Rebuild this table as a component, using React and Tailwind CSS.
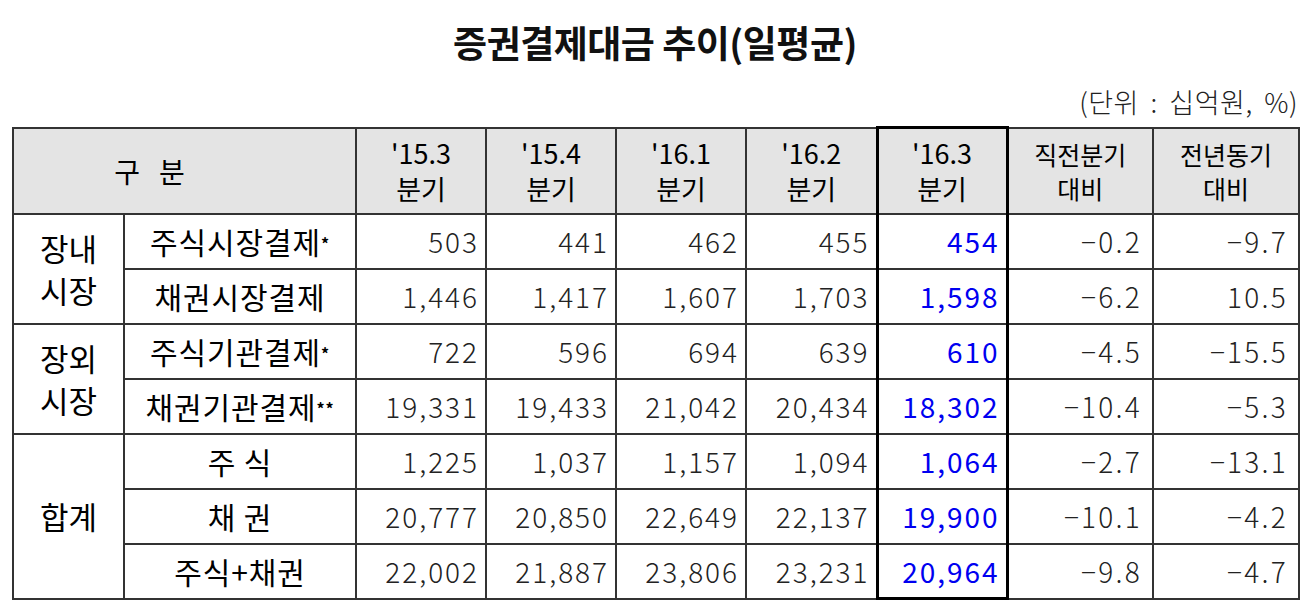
const cols = ["'15.3", "'15.4", "'16.1", "'16.2", "'16.3"];

const rows = [
  { group: ['장내', '시장'], span: 2, label: '주식시장결제', mark: '*', v: ['503', '441', '462', '455', '454'], a: '-0.2', b: '-9.7' },
  { label: '채권시장결제', v: ['1,446', '1,417', '1,607', '1,703', '1,598'], a: '-6.2', b: '10.5' },
  { group: ['장외', '시장'], span: 2, label: '주식기관결제', mark: '*', v: ['722', '596', '694', '639', '610'], a: '-4.5', b: '-15.5' },
  { label: '채권기관결제', mark: '**', v: ['19,331', '19,433', '21,042', '20,434', '18,302'], a: '-10.4', b: '-5.3' },
  { group: ['합계'], span: 3, label: '주 식', v: ['1,225', '1,037', '1,157', '1,094', '1,064'], a: '-2.7', b: '-13.1' },
  { label: '채 권', v: ['20,777', '20,850', '22,649', '22,137', '19,900'], a: '-10.1', b: '-4.2' },
  { label: '주식+채권', v: ['22,002', '21,887', '23,806', '23,231', '20,964'], a: '-9.8', b: '-4.7' },
];

const font = { fontFamily: '"Noto Sans CJK KR", "Noto Sans", sans-serif' };
const cell = 'border-2 border-[#333]';
const hot = 'border-x-[3px] border-x-black';

export default function App() {
  return (
    <div className="w-[1310px] h-[611px] bg-white text-black" style={font}>
      <h1 className="pt-[16px] text-center text-[37px] font-bold leading-[52px] tracking-[-0.5px] text-[#111]">
        증권결제대금 추이(일평균)
      </h1>
      <div className="pr-[12px] pt-[16px] text-right text-[27px] leading-[36px] font-light text-[#222] [word-spacing:5px] tracking-[0.02em]">
        (단위 : 십억원, %)
      </div>
      <table className="ml-[12px] mt-[6px] border-collapse table-fixed w-[1286px]">
        <colgroup>
          <col className="w-[111px]" />
          <col className="w-[232px]" />
          <col className="w-[130px]" />
          <col className="w-[130px]" />
          <col className="w-[130px]" />
          <col className="w-[131px]" />
          <col className="w-[130px]" />
          <col className="w-[146px]" />
          <col className="w-[146px]" />
        </colgroup>
        <thead>
          <tr className="h-[86px] bg-[#e4e4e4]">
            <th colSpan={2} className={`${cell} text-[28px] font-normal pr-[70px]`}>
              구&nbsp;&nbsp;&nbsp;분
            </th>
            {cols.map((c, i) => (
              <th
                key={c}
                className={`${cell} ${i === 4 ? hot + ' border-t-[3px] border-t-black' : ''} text-[27px] font-normal leading-[36px]`}
              >
                {c}
                <br />
                분기
              </th>
            ))}
            <th className={`${cell} text-[25px] font-normal leading-[34px]`}>
              직전분기
              <br />
              대비
            </th>
            <th className={`${cell} text-[25px] font-normal leading-[34px]`}>
              전년동기
              <br />
              대비
            </th>
          </tr>
        </thead>
        <tbody>
          {rows.map((r, ri) => (
            <tr key={ri} className="h-[55px]">
              {r.group && (
                <td rowSpan={r.span} className={`${cell} text-center text-[31px] leading-[42px] font-normal`}>
                  {r.group.map((g) => (
                    <div key={g}>{g}</div>
                  ))}
                </td>
              )}
              <td className={`${cell} text-center text-[30px] font-normal tracking-[0.03em]`}>
                {r.label}
                {r.mark && <sup className="text-[16px] font-bold relative top-[-4px]">{r.mark}</sup>}
              </td>
              {r.v.map((v, i) => (
                <td
                  key={i}
                  className={`${cell} ${
                    i === 4 ? hot + (ri === rows.length - 1 ? ' border-b-[3px] border-b-black' : '') + ' text-[#0000f0] font-normal' : 'font-light text-[#222]'
                  } text-right pr-[6px] text-[28px] tracking-[0.07em]`}
                >
                  {v}
                </td>
              ))}
              <td className={`${cell} text-right pr-[10px] text-[28px] font-light text-[#222] tracking-[0.08em]`}>
                {r.a.replace('-', '−')}
              </td>
              <td className={`${cell} text-right pr-[10px] text-[28px] font-light text-[#222] tracking-[0.08em]`}>
                {r.b.replace('-', '−')}
              </td>
            </tr>
          ))}
        </tbody>
      </table>
    </div>
  );
}
